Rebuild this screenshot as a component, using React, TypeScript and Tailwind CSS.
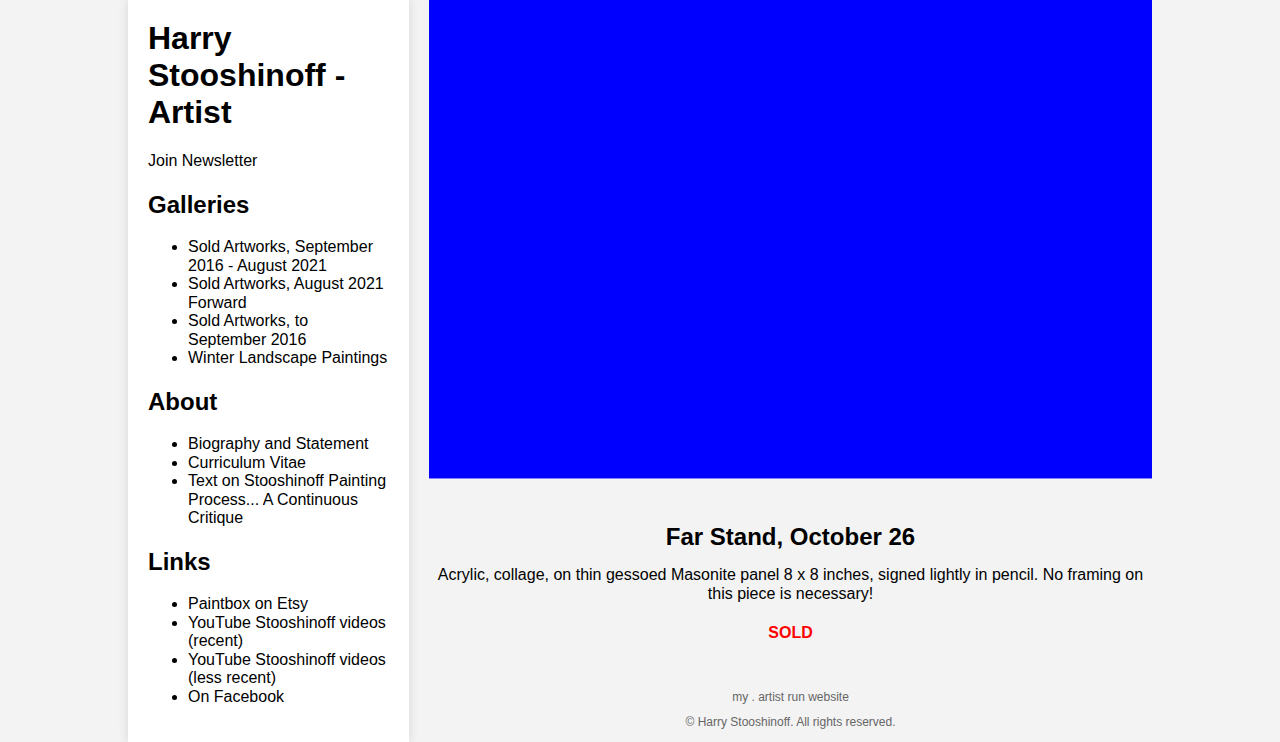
const GALLERIES = [
  "Sold Artworks, September 2016 - August 2021",
  "Sold Artworks, August 2021 Forward",
  "Sold Artworks, to September 2016",
  "Winter Landscape Paintings",
];

const ABOUT = [
  "Biography and Statement",
  "Curriculum Vitae",
  "Text on Stooshinoff Painting Process... A Continuous Critique",
];

const LINKS = [
  "Paintbox on Etsy",
  "YouTube Stooshinoff videos (recent)",
  "YouTube Stooshinoff videos (less recent)",
  "On Facebook",
];

function Section({ title, items }: { title: string; items: string[] }) {
  return (
    <>
      <h2 className="mt-5 mb-5 text-[24px] font-bold leading-[27.6px]">{title}</h2>
      <ul className="mb-4 list-disc pl-10 text-[16px] leading-[18.5px]">
        {items.map((item) => (
          <li key={item}>{item}</li>
        ))}
      </ul>
    </>
  );
}

export default function App() {
  return (
    <div className="min-h-[742px] bg-[#f3f3f3] font-['Liberation_Sans',Arial,sans-serif] text-black">
      <div className="mx-auto grid w-[1024px] grid-cols-[281px_1fr] gap-5">
        {/* sidebar */}
        <aside className="bg-white px-5 pt-5 pb-5 shadow-[0_0_10px_rgba(0,0,0,0.12)]">
          <h1 className="mb-[21px] text-[32px] font-bold leading-[37px]">
            Harry Stooshinoff - Artist
          </h1>
          <p className="text-[16px] leading-[18.5px]">Join Newsletter</p>
          <Section title="Galleries" items={GALLERIES} />
          <Section title="About" items={ABOUT} />
          <Section title="Links" items={LINKS} />
        </aside>

        {/* main */}
        <main className="flex flex-col">
          <div className="h-[479px] border-b border-[#8080f8] bg-[#0000ff]" />
          <div className="px-2 pt-[44px] text-center">
            <h2 className="text-[24px] font-bold leading-[27.6px]">Far Stand, October 26</h2>
            <p className="mt-[14px] text-[16px] leading-[19px]">
              Acrylic, collage, on thin gessoed Masonite panel 8 x 8 inches, signed lightly in
              pencil. No framing on this piece is necessary!
            </p>
            <p className="mt-[21px] text-[16px] font-bold leading-[18.4px] text-[#ff0000]">SOLD</p>
          </div>
          <footer className="pt-[49px] text-center text-[12px] leading-[13.8px] text-[#666666]">
            <p>my . artist run website</p>
            <p className="mt-[11px]">© Harry Stooshinoff. All rights reserved.</p>
          </footer>
        </main>
      </div>
    </div>
  );
}
